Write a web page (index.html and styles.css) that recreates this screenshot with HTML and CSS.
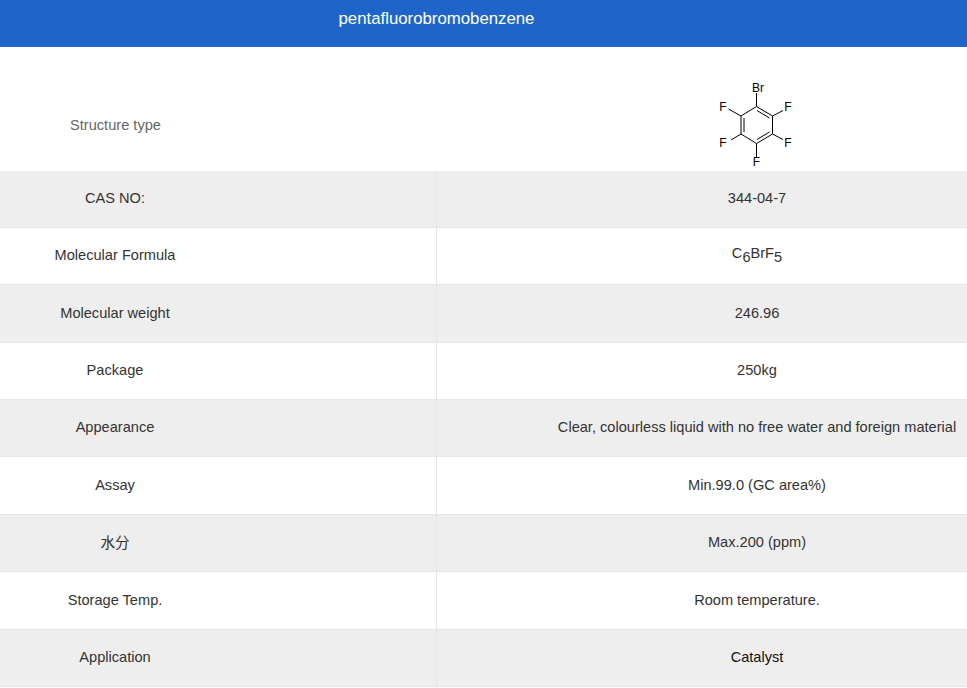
FILE: index.html
```
<!DOCTYPE html>
<html lang="en">
<head>
<meta charset="utf-8">
<title>pentafluorobromobenzene</title>
<link rel="stylesheet" href="styles.css">
</head>
<body>
<header class="title-bar"><h1 class="title">pentafluorobromobenzene</h1></header>
<table class="spec">
<tbody>
<tr class="row-structure">
<th class="label label-muted">Structure type</th>
<td class="value">
<svg class="molecule" width="74" height="90" viewBox="0 0 74 90" aria-label="Structure">
<g class="bonds">
<path d="M36.5 25.5 L52.5 35 L52.5 53 L36.5 62.5 L21 53 L21 35 Z"/>
<path d="M37 29.5 L49.5 37 M49.5 51 L37 58.5 M24 37 L24 51"/>
<path d="M36.5 12 L36.5 25.5 M21 35 L8.5 28 M52.5 35 L63 29.5 M52.5 53 L63 58.5 M21 53 L11 59 M36.5 62.5 L36.5 76"/>
</g>
<text class="atom" x="38" y="11">Br</text>
<text class="atom" x="3" y="29.5">F</text>
<text class="atom" x="68" y="29.5">F</text>
<text class="atom" x="3" y="66">F</text>
<text class="atom" x="68" y="66">F</text>
<text class="atom" x="36.5" y="84.5">F</text>
</svg>
</td>
</tr>
<tr class="row-alt"><th class="label">CAS NO:</th><td class="value">344-04-7</td></tr>
<tr><th class="label">Molecular Formula</th><td class="value value-formula">C<sub class="sub">6</sub>BrF<sub class="sub">5</sub></td></tr>
<tr class="row-alt row-tall"><th class="label">Molecular weight</th><td class="value">246.96</td></tr>
<tr><th class="label">Package</th><td class="value">250kg</td></tr>
<tr class="row-alt"><th class="label">Appearance</th><td class="value">Clear, colourless liquid with no free water and foreign material</td></tr>
<tr class="row-tall"><th class="label">Assay</th><td class="value">Min.99.0 (GC area%)</td></tr>
<tr class="row-alt"><th class="label">水分</th><td class="value">Max.200 (ppm)</td></tr>
<tr class="row-tall"><th class="label">Storage Temp.</th><td class="value">Room temperature.</td></tr>
<tr class="row-alt"><th class="label">Application</th><td class="value value-dark">Catalyst</td></tr>
<tr class="row-end"><th class="label"></th><td class="value"></td></tr>
</tbody>
</table>
</body>
</html>
```
FILE: styles.css
```
html, body {
  margin: 0;
  padding: 0;
  background: #fff;
  overflow: hidden;
  height: 688px;
}
body {
  font-family: "Liberation Sans", "Noto Sans CJK SC", Arial, sans-serif;
  font-size: 14.6px;
  color: #333;
}
.title-bar {
  height: 47px;
  background: #1f65c9;
  box-sizing: border-box;
  padding: 8px 94px 0 0;
  text-align: center;
}
.title {
  margin: 0;
  font-size: 16.8px;
  font-weight: 400;
  line-height: 21px;
  color: #fff;
}
.spec {
  width: 967px;
  table-layout: fixed;
  border-collapse: separate;
  border-spacing: 0;
}
.spec tr {
  height: 57px;
}
.spec .row-tall {
  height: 58px;
}
.spec .row-structure {
  height: 124px;
}
.spec .row-end {
  height: 1px;
}
.row-alt {
  background: #eee;
}
.label, .value {
  box-sizing: border-box;
  padding: 0 0 3px;
  font-weight: 400;
  text-align: center;
  vertical-align: middle;
  border-bottom: 1px solid #e6e6e6;
}
.label {
  width: 437px;
  padding-right: 206px;
  border-right: 1px solid #e6e6e6;
}
.value {
  padding-left: 110px;
}
.row-tall .label, .row-tall .value {
  padding-bottom: 1px;
}
.row-structure .label {
  border: 0;
  padding: 32px 206px 0 0;
}
.row-structure .value {
  border: 0;
  padding: 34px 0 0 110px;
}
.label-muted {
  color: #666;
}
.value-dark {
  color: #111;
}
.value-formula {
  padding-bottom: 7px;
}
.row-end .label, .row-end .value {
  border-bottom: 0;
  padding-top: 0;
  padding-bottom: 0;
  font-size: 0;
  line-height: 0;
}
.sub {
  font-size: 14.6px;
  line-height: 0;
}
.molecule {
  display: block;
  margin: 0 auto;
}
.bonds {
  fill: none;
  stroke: #000;
  stroke-width: 1;
}
.atom {
  font-family: "Liberation Sans", Arial, sans-serif;
  font-size: 12px;
  fill: #000;
  text-anchor: middle;
}
```
